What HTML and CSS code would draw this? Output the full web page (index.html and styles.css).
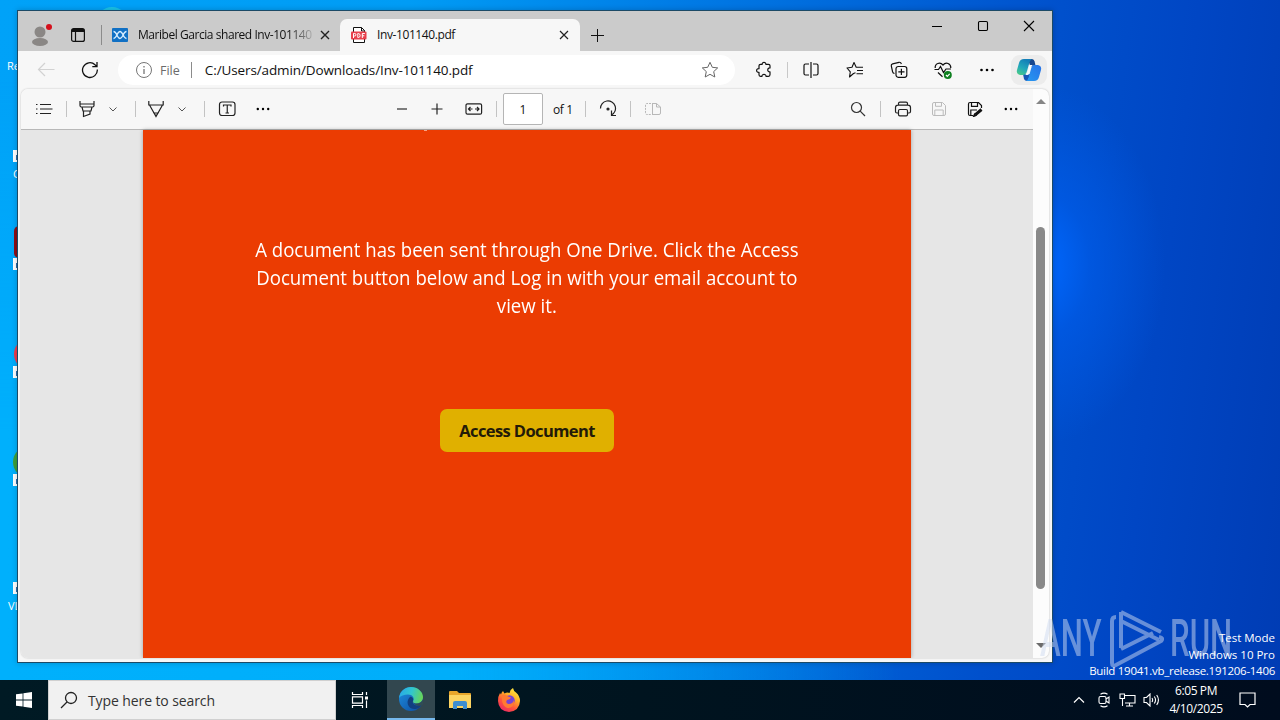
FILE: index.html
```html
<!DOCTYPE html>
<html lang="en">
<head>
    <meta charset="UTF-8">
    <meta name="viewport" content="width=device-width, initial-scale=1.0">
    <title>Inv-101140.pdf</title>
    <link rel="stylesheet" href="styles.css">
</head>
<body>
    <div class="desktop">
        <!-- desktop shortcuts, mostly hidden behind the window -->
        <span class="shortcut-label label-recycle">Recycle Bin</span>
        <span class="shortcut-arrow arrow-1"></span>
        <span class="shortcut-label label-ccleaner">CCleaner</span>
        <span class="shortcut-app app-red"></span>
        <span class="shortcut-arrow arrow-2"></span>
        <span class="shortcut-app app-opera"></span>
        <span class="shortcut-arrow arrow-3"></span>
        <span class="shortcut-app app-green"></span>
        <span class="shortcut-arrow arrow-4"></span>
        <span class="shortcut-arrow arrow-5"></span>
        <span class="shortcut-label label-vlc">VLC</span>
        <span class="shortcut-top"></span>

        <div class="window">
            <div class="tabstrip">
                <div class="profile">
                    <svg width="24" height="28" viewBox="0 0 24 28"><circle cx="11" cy="13" r="5.5" fill="#8a8785"/><ellipse cx="11" cy="23" rx="8" ry="4" fill="#8a8785"/><circle cx="20" cy="8" r="3" fill="#d5101c"/></svg>
                </div>
                <div class="workspaces">
                    <svg width="16" height="16" viewBox="0 0 16 16" fill="none" stroke="#111" stroke-width="1.2"><rect x="1.6" y="1.6" width="12.8" height="12.8" rx="2"/><path d="M2 2.8h12M2 4.2h12" stroke-width="1.6"/><path d="M5.5 4v10"/></svg>
                </div>
                <span class="strip-sep"></span>
                <div class="tab">
                    <svg width="16" height="14" viewBox="0 0 16 14"><rect width="16" height="14" rx="1" fill="#1170c4"/><path d="M1.500 3.500C5 3.500 5 10.500 8 10.500S11 3.500 14.500 3.500M1.500 10.500C5 10.500 5 3.500 8 3.500S11 10.500 14.500 10.500" fill="none" stroke="#d5ecff" stroke-width="1.300"/></svg>
                    <span class="tab-title fade">Maribel Garcia shared Inv-101140</span>
                    <svg class="tab-close" width="10" height="10" viewBox="0 0 10 10" stroke="#222" stroke-width="1.4"><path d="M1 1l8 8M9 1l-8 8"/></svg>
                </div>
                <div class="tab active">
                    <svg width="16" height="16" viewBox="0 0 16 16"><path d="M2.500 15.500V.5h8l3 3v12z" fill="#fff" stroke="#111"/><path d="M10.500.5v3.500h3.500" fill="none" stroke="#111"/><rect x="0" y="4.500" width="15.500" height="8" rx="1" fill="#e8404c"/><path d="M2.500 11V6.500h1.200a1.200 1.200 0 0 1 0 2.500H2.500M6.800 6.500v4h.8c2 0 2-4 0-4zM11.300 11V6.500h2.500M11.300 8.800h2" fill="none" stroke="#fff"/></svg>
                    <span class="tab-title">Inv-101140.pdf</span>
                    <svg class="tab-close" width="10" height="10" viewBox="0 0 10 10" stroke="#222" stroke-width="1.2"><path d="M1 1l8 8M9 1l-8 8"/></svg>
                </div>
                <svg class="new-tab" width="15" height="15" viewBox="0 0 15 15" stroke="#111"><path d="M1 7.500h13M7.500 1v13"/></svg>
                <div class="caption">
                    <svg width="12" height="12" viewBox="0 0 12 12" stroke="#000"><path d="M1 6.500h10"/></svg>
                    <svg width="12" height="12" viewBox="0 0 12 12" fill="none" stroke="#000" stroke-width="1.100"><rect x="1.500" y="1.500" width="9" height="9" rx="1.200"/></svg>
                    <svg width="12" height="12" viewBox="0 0 12 12" stroke="#000" stroke-width="1.100"><path d="M1 1l10 10M11 1L1 11"/></svg>
                </div>
            </div>

            <div class="navbar">
                <span class="slot"><svg width="18" height="16" viewBox="0 0 18 16" fill="none" stroke="#d2d2d2" stroke-width="1.200"><path d="M17.500 7.500H1.500M8 1L1.500 7.500 8 14"/></svg></span>
                <span class="slot"><svg width="18" height="18" viewBox="0 0 18 18" fill="none" stroke="#111" stroke-width="1.300"><path d="M16.300 8.500a7.400 7.400 0 1 1-2.300-4.800L16 5.500M16 1v4.700h-4.700"/></svg></span>
                <div class="address">
                    <svg width="18" height="18" viewBox="0 0 18 18" fill="none" stroke="#767676"><circle cx="9" cy="9" r="7.500"/><path d="M9 8v5M9 5v1.400" stroke-width="1.300"/></svg>
                    <span class="scheme">File</span>
                    <span class="addr-sep"></span>
                    <span class="url">C:/Users/admin/Downloads/Inv-101140.pdf</span>
                    <svg class="star" width="18" height="18" viewBox="0 0 18 18" fill="none" stroke="#666" stroke-linejoin="round"><path d="M9 1.300l2.300 5 5.400.6-4 3.700 1.100 5.400L9 13.300 4.200 16l1.100-5.400-4-3.700 5.400-.6z"/></svg>
                </div>
                <span class="slot"><svg width="18" height="18" viewBox="0 0 18 18" fill="none" stroke="#111" stroke-width="1.200" stroke-linejoin="round"><path d="M5.500 3.300H7.200C6.800.8 11.200.8 10.800 3.300H13.500Q15 3.300 15 4.800V7C12 6.600 12 11.200 15 10.800V13.500Q15 15.300 13.500 15.300H11C11.200 12.800 6.800 12.800 7 15.300H5.500Q4 15.300 4 13.800V11.300C.8 11.700.8 7.300 4 7.700V4.800Q4 3.300 5.500 3.300z"/></svg></span>
                <span class="nav-sep"></span>
                <span class="slot"><svg width="18" height="18" viewBox="0 0 18 18" fill="none" stroke="#111" stroke-width="1.200"><path d="M7 3H3.500Q2 3 2 4.500v8Q2 14 3.500 14H7M11 3h3.500Q16 3 16 4.500v8q0 1.500-1.500 1.500H11M9 1v16"/></svg></span>
                <span class="slot"><svg width="18" height="18" viewBox="0 0 18 18" fill="none" stroke="#111" stroke-width="1.100" stroke-linejoin="round"><path d="M9.500 11.800L7.500 12.500 3.500 16l.8-5.200L1 7l5-.8L8 1.500l2.200 4.700H17M11 9.500h6M10.500 12.800H17"/></svg></span>
                <span class="slot"><svg width="18" height="18" viewBox="0 0 18 18" fill="none" stroke="#111" stroke-width="1.200"><path d="M4.500 12.500Q3 12.300 2.600 10.800L1.300 5Q1 3.300 2.600 2.900L9 1.300Q10.800 1 11.400 3"/><rect x="6" y="5.500" width="10.800" height="10.800" rx="2.200"/><path d="M11.400 7.800v6.200M8.300 10.900h6.200"/></svg></span>
                <span class="slot"><svg width="18" height="18" viewBox="0 0 18 18" fill="none" stroke="#111" stroke-width="1.200"><path d="M1.200 7C.8 2.500 6 .5 9 4 12 .5 17 2.500 16.800 7M4 11.500L8.500 15.800M.5 8.500H4.500L6.500 5.500 9.500 11.500 12 8H17"/><circle cx="13.800" cy="14" r="4" fill="#0f8020" stroke="none"/><path d="M12 14l1.300 1.300 2.400-2.500" stroke="#fff"/></svg></span>
                <span class="slot"><svg width="16" height="4" viewBox="0 0 16 4"><circle cx="2.500" cy="2" r="1.300"/><circle cx="8" cy="2" r="1.300"/><circle cx="13.500" cy="2" r="1.300"/></svg></span>
                <div class="copilot">
                    <svg width="26" height="24" viewBox="0 0 26 24">
                        <defs>
                            <linearGradient id="cpLeft" x1="0" y1="1" x2=".5" y2="0"><stop offset="0" stop-color="#4fd07f"/><stop offset=".5" stop-color="#22a8bb"/><stop offset="1" stop-color="#147fb8"/></linearGradient>
                            <linearGradient id="cpRight" x1="0" y1="1" x2="1" y2="0"><stop offset="0" stop-color="#2699f0"/><stop offset="1" stop-color="#2872e8"/></linearGradient>
                        </defs>
                        <path d="M12 1h4q2 0 2.600 2.500l.8 3.500-5 2z" fill="#17468e"/>
                        <path d="M7 16h7l-2 7q-3 .5-4-2z" fill="#1757b7"/>
                        <path d="M8 1h8q-2 1-2.700 4L11 13q-1 4-4 4H4q-4-1-3-5l2-7q1-4 5-4z" fill="url(#cpLeft)"/>
                        <path d="M18 7h4q4 1 3 5l-2 7q-1 4-5 4h-8q2-1 2.800-4L15 11q1-4 3-4z" fill="url(#cpRight)"/>
                        <path d="M13.500 7h3.200q-1.700 1.500-2.200 4l-1.500 5q-.5 1-1.500 1H9q2-1 2.500-3z" fill="#f4fbff"/>
                    </svg>
                </div>
            </div>

            <div class="viewer">
                <div class="viewer-main">
                    <div class="pdfbar">
                        <span class="tool"><svg width="18" height="14" viewBox="0 0 18 14" fill="none" stroke="#222" stroke-width="1.200"><path d="M5 2.500h11M5 7h12.500M5 11.500h11"/><path d="M1 2.500h1.500M1 7h1.500M1 11.500h1.500"/></svg></span>
                        <span class="bar-sep"></span>
                        <span class="tool narrow"><svg width="16" height="18" viewBox="0 0 16 18" fill="none" stroke="#222" stroke-width="1.200"><path d="M1 1v4.500Q1 7 2.500 7h11Q15 7 15 5.500V1M1 4h14M3 7l1 4h8l1-4M4.500 11v5.500l6.500-2.500V11"/></svg></span>
                        <span class="chevron"><svg width="8" height="5" viewBox="0 0 8 5" fill="none" stroke="#555"><path d="M.5.5L4 4 7.500.5"/></svg></span>
                        <span class="bar-sep far"></span>
                        <span class="tool narrow"><svg width="16" height="18" viewBox="0 0 16 18" fill="none" stroke="#222" stroke-width="1.200"><path d="M.8 1v4h14.400V1M1.500 5L8 16.500 14.500 5M6 13h4l-2 3z"/></svg></span>
                        <span class="chevron"><svg width="8" height="5" viewBox="0 0 8 5" fill="none" stroke="#555"><path d="M.5.5L4 4 7.500.5"/></svg></span>
                        <span class="bar-sep far"></span>
                        <span class="tool"><svg width="18" height="16" viewBox="0 0 18 16" fill="none" stroke="#222" stroke-width="1.200"><rect x="1.500" y="1" width="15.500" height="13.500" rx="2.500"/><path d="M5.500 5.500V4H13v1.500M9.250 4v8M7.500 12H11"/></svg></span>
                        <span class="tool"><svg width="14" height="4" viewBox="0 0 14 4"><circle cx="1.800" cy="2" r="1.200"/><circle cx="7" cy="2" r="1.200"/><circle cx="12.200" cy="2" r="1.200"/></svg></span>

                        <span class="tool zoom-out"><svg width="12" height="12" viewBox="0 0 12 12" stroke="#555"><path d="M1 6h10" stroke-width="1.400"/></svg></span>
                        <span class="tool zoom-in"><svg width="12" height="12" viewBox="0 0 12 12" stroke="#222" stroke-width="1.200"><path d="M.5 6h11M6 .5v11"/></svg></span>
                        <span class="tool fit"><svg width="18" height="12" viewBox="0 0 18 12" fill="none" stroke="#222" stroke-width="1.200"><rect x="1" y=".8" width="15.600" height="10.400" rx="1.500"/><path d="M3.500 6H7.500M5.500 4l-2 2 2 2M10 6h4M12 4l2 2-2 2"/></svg></span>
                        <span class="bar-sep page-sep"></span>
                        <span class="page-box">1</span>
                        <span class="page-total">of 1</span>
                        <span class="bar-sep total-sep"></span>
                        <span class="tool"><svg width="18" height="18" viewBox="0 0 18 18" fill="none" stroke="#222" stroke-width="1.200"><path d="M1.500 8.500a7.500 7.500 0 1 1 11 6.500M12.500 10.500V15.500H17"/><circle cx="9" cy="9" r="1" fill="#222"/></svg></span>
                        <span class="bar-sep"></span>
                        <span class="tool"><svg width="18" height="14" viewBox="0 0 18 14" fill="none" stroke="#b8b8b8"><path d="M7 1.500H3Q1.500 1.500 1.500 3v8Q1.500 12.500 3 12.500H7" stroke-dasharray="2 1"/><path d="M8.500 1v12M8.500 1.500h4L16.500 5v6q0 1.500-1.500 1.500H8.500M12.500 1.500V5h4"/></svg></span>

                        <span class="tool search"><svg width="16" height="16" viewBox="0 0 16 16" fill="none" stroke="#333" stroke-width="1.200"><circle cx="6.500" cy="6.500" r="5"/><path d="M10.200 10.200l4.800 4.800"/></svg></span>
                        <span class="bar-sep"></span>
                        <span class="tool"><svg width="18" height="16" viewBox="0 0 18 16" fill="none" stroke="#222" stroke-width="1.200"><path d="M4.500 4V2.500Q4.500 1.200 6 1.200h6q1.500 0 1.500 1.300V4M4.500 12H3Q1.500 12 1.500 10.500V6.500Q1.500 4.200 4 4.200h10q2.500 0 2.500 2.300v4Q16.500 12 15 12h-1.500"/><rect x="4.500" y="8.500" width="9" height="6.300" rx="1.300"/></svg></span>
                        <span class="tool"><svg width="16" height="16" viewBox="0 0 16 16" fill="none" stroke="#bbb"><path d="M3 1.500h8.500l3 3V13q0 1.500-1.500 1.500H3Q1.500 14.500 1.500 13V3Q1.500 1.500 3 1.500zM4.500 1.500v3.800h6V1.500M3.800 14.500V9h8.400v5.500"/></svg></span>
                        <span class="tool"><svg width="16" height="16" viewBox="0 0 16 16" fill="none" stroke="#111" stroke-width="1.200"><path d="M6 14.500H3Q1.500 14.500 1.500 13V3Q1.500 1.500 3 1.500h8.500l3 3V7M4.500 1.500v3.800h6V1.500M3.800 14.500V9H10"/><path d="M8.500 13.700L14.500 8.500" stroke-width="3"/><path d="M6.500 15.500l1-2.500 1.500 1.500z" fill="#111"/></svg></span>
                        <span class="tool"><svg width="14" height="4" viewBox="0 0 14 4"><circle cx="1.800" cy="2" r="1.200"/><circle cx="7" cy="2" r="1.200"/><circle cx="12.200" cy="2" r="1.200"/></svg></span>
                    </div>
                    <div class="canvas">
                        <div class="page">
                            <span class="page-mark"></span>
                            <p class="message">A document has been sent through One Drive. Click the Access<br>Document button below and Log in with your email account to<br>view it.</p>
                            <span class="access">Access Document</span>
                        </div>
                    </div>
                </div>
                <div class="scrollbar">
                    <span class="scroll-up"></span>
                    <span class="scroll-thumb"></span>
                    <span class="scroll-down"></span>
                </div>
            </div>
        </div>

        <div class="anyrun">
            <span>ANY</span>
            <svg width="54" height="60" viewBox="0 0 54 60" fill="none" stroke="currentColor" stroke-width="4" stroke-linejoin="round"><path d="M11 3L51 23M11 3v36M6 8Q2 8 2 12V54Q2 58 6 56L51 32Q54 29 49 28M11 12l38 19M11 40L43 24"/></svg>
            <span>RUN</span>
        </div>
        <div class="build">
            <span>Test Mode</span>
            <span>Windows 10 Pro</span>
            <span class="build-no">Build 19041.vb_release.191206-1406</span>
        </div>
    </div>

    <div class="taskbar">
        <span class="task start"><svg width="16" height="16" viewBox="0 0 16 16" fill="#fff"><path d="M0 2.300l6.600-.9v6.200H0zM7.400 1.200L16 0v7.600H7.400zM0 8.400h6.600v6.200L0 13.700zM7.400 8.400H16V16l-8.600-1.200z"/></svg></span>
        <div class="searchbox">
            <svg width="18" height="18" viewBox="0 0 18 18" fill="none" stroke="#222" stroke-width="1.300"><circle cx="11" cy="7" r="5.500"/><path d="M7 11l-6 6"/></svg>
            <span>Type here to search</span>
        </div>
        <span class="task start"><svg width="18" height="18" viewBox="0 0 18 18" fill="none" stroke="#fff" stroke-width="1.200"><path d="M1.500 1v2.500h10V1M1.500 17v-2.500h10V17M1.500 5.800h10v6.400h-10zM15.500 1v3M15.500 9.500V17"/><path d="M14 5.500h3v3h-3z" fill="#fff" stroke="none"/></svg></span>
        <span class="task current"><svg width="24" height="24" viewBox="0 0 24 24">
            <defs>
                <linearGradient id="edgeTop" x1="0" y1=".3" x2="1" y2=".5"><stop offset="0" stop-color="#28a8e8"/><stop offset=".5" stop-color="#31c6cf"/><stop offset="1" stop-color="#68d557"/></linearGradient>
                <linearGradient id="edgeLow" x1="0" y1="0" x2="1" y2="1"><stop offset="0" stop-color="#1f8fe0"/><stop offset="1" stop-color="#0c4ba0"/></linearGradient>
            </defs>
            <circle cx="12" cy="12" r="12" fill="url(#edgeLow)"/>
            <path d="M0 11C1 4 6 0 12 0c7 0 12 5 12 10 0 4-3 6.500-6.500 6.500-3 0-4.500-1-3.500-2.500 2-3-.5-6.500-5-6.500C5 7.500 1.500 9 0 11z" fill="url(#edgeTop)"/>
            <path d="M14 14c-1 2 1 4.500 4.500 4.500 2 0 3.500-.7 4.200-1C21 21 18 22 15.500 22 10 22 7.500 17 9 13c.7-2 2-3 2.500-3.300 2 .3 3.500 2.300 2.500 4.300z" fill="#123f80"/>
            <path d="M14 14c-1 1.500.5 2.500 3.500 2.500 3 0 5-1.500 6.500-4v5c-3 3-9.500 1-10-3.500z" fill="#314b55"/>
        </svg></span>
        <span class="task"><svg width="22" height="20" viewBox="0 0 22 20"><path d="M0 2q0-1 1-1h7l2 2h11q1 0 1 1v4H0z" fill="#e8a62b"/><path d="M0 5h22v13H0z" fill="#fcd462"/><path d="M4 19v-6q0-2 2-2h10q2 0 2 2v6h-4v-3H8v3z" fill="#3e8ed0"/></svg></span>
        <span class="task"><svg width="24" height="24" viewBox="0 0 24 24">
            <defs>
                <linearGradient id="fox" x1=".8" y1="0" x2=".2" y2="1"><stop offset="0" stop-color="#fff044"/><stop offset=".35" stop-color="#ffb027"/><stop offset=".65" stop-color="#ff563b"/><stop offset="1" stop-color="#e82567"/></linearGradient>
            </defs>
            <path d="M3 5l1 1.500Q4.500 4 6 3l1.500 2.500Q10 4 12.500 5 13 1.500 16 0q.5 3 3 4.500Q23 8 23 13q-.5 10-11 11Q1.500 23 1 13 1 8 3 5z" fill="url(#fox)"/>
            <circle cx="12.500" cy="12.500" r="5.200" fill="#7543d6"/>
            <path d="M5 7q3-1.500 6 1.500l3 1q-1 2-4 2.500-2 3 1.500 4 4.500 0 5.500-4 1 8-6.500 8Q4 18 5 7z" fill="#ff7a32"/>
        </svg></span>
        <div class="tray">
            <svg class="tray-up" width="12" height="8" viewBox="0 0 12 8" fill="none" stroke="#fff" stroke-width="1.200"><path d="M1 6.500l5-5 5 5"/></svg>
            <svg class="tray-cam" width="12" height="16" viewBox="0 0 12 16" fill="none" stroke="#fff" stroke-width="1.100"><rect x="1" y="4.500" width="7" height="7" rx="1.500"/><path d="M8 7l3-2v6L8 9M2.500 2.200Q6 0 9.500 2.200M2.500 13.800Q6 16 9.500 13.800"/></svg>
            <svg class="tray-net" width="17" height="14" viewBox="0 0 17 14" fill="none" stroke="#fff" stroke-width="1.100"><path d="M5 2.500h11v7.500H6M10.500 10v3M7 13h7M3.500 6v7M1 1h4.500v4.500H1z"/></svg>
            <svg class="tray-vol" width="18" height="14" viewBox="0 0 18 14" fill="none" stroke="#fff" stroke-width="1.100"><path d="M1 4.500h2.500L7 1v12L3.500 9.500H1zM9 5q1.300 2 0 4M11.300 3.500q2.500 3.500 0 7M13.700 2q3.500 5 0 10"/></svg>
            <div class="clock"><span>6:05 PM</span><span>4/10/2025</span></div>
            <svg class="tray-note" width="17" height="17" viewBox="0 0 17 17" fill="none" stroke="#fff" stroke-width="1.200"><path d="M1 1h15v11.500h-5L8.500 15 6 12.500H1z"/></svg>
        </div>
    </div>
</body>
</html>
```

FILE: styles.css
```css
* {
    box-sizing: border-box;
}
body {
    margin: 0;
    width: 1280px;
    height: 720px;
    overflow: hidden;
    font-family: "Open Sans", "Noto Sans", sans-serif;
    font-size: 12px;
    color: #111;
}
svg {
    display: block;
    flex: none;
}

/* desktop */
.desktop {
    position: relative;
    height: 680px;
    overflow: hidden;
    background:
        radial-gradient(ellipse 125px 180px at 1040px 265px, #0068ff 0%, rgba(0, 94, 238, 0.6) 40%, rgba(0, 80, 210, 0) 100%),
        linear-gradient(97deg, #00a2f8 0%, #009cf5 30%, #0078e4 52%, #0050cc 78%, #0046c4 88%, #003cb4 100%);
}
.desktop::before {
    content: "";
    position: absolute;
    left: 0;
    bottom: 0;
    width: 900px;
    height: 600px;
    background: linear-gradient(to right, #00b0fc, #00aefa 50%, rgba(0, 150, 245, 0));
    -webkit-mask-image: linear-gradient(to bottom, transparent, #000 60%);
    mask-image: linear-gradient(to bottom, transparent, #000 60%);
}
.shortcut-label {
    position: absolute;
    color: #fff;
    font-size: 11px;
    white-space: nowrap;
}
.label-recycle { left: 7px; top: 58px; }
.label-ccleaner { left: 13px; top: 166px; }
.label-vlc { left: 8px; top: 598px; }
.shortcut-arrow {
    position: absolute;
    left: 13px;
    width: 11px;
    height: 12px;
    background: #fff;
}
.shortcut-arrow::after {
    content: "";
    position: absolute;
    left: 3px;
    top: 5px;
    width: 4px;
    height: 5px;
    background: #2a6cb0;
}
.arrow-1 { top: 150px; }
.arrow-2 { top: 258px; }
.arrow-3 { top: 366px; }
.arrow-4 { top: 474px; }
.arrow-5 { top: 582px; }
.shortcut-app {
    position: absolute;
    left: 14px;
    width: 32px;
    height: 32px;
}
.app-red { top: 226px; background: #8e1018; border-radius: 5px; }
.app-opera { top: 338px; background: #f03c4c; border-radius: 50%; }
.app-green { left: 13px; top: 446px; background: #3c9f3c; border-radius: 50%; }
.shortcut-top {
    position: absolute;
    left: 96px;
    top: 7px;
    width: 32px;
    height: 32px;
    background: #19c3e8;
    border-radius: 50%;
}

/* browser window */
.window {
    position: absolute;
    left: 17px;
    top: 10px;
    width: 1036px;
    height: 653px;
    display: flex;
    flex-direction: column;
    background: #f7f7f7;
    border: 1px solid #1c4a66;
    box-shadow: 0 0 6px rgba(0, 0, 0, 0.2);
}
.tabstrip {
    display: flex;
    height: 40px;
    flex: none;
    align-items: center;
    padding-top: 8px;
    background: #cbcbcb;
}
.profile {
    margin: -5px 0 0 11px;
    width: 24px;
}
.workspaces {
    margin-left: 17px;
}
.strip-sep {
    width: 1px;
    height: 20px;
    margin-left: 15px;
    background: #8b8b8b;
}
.tab {
    display: flex;
    align-items: center;
    align-self: stretch;
    width: 238px;
    padding: 0 10px;
}
.tab.active {
    width: 240px;
    padding: 0 11px;
    background: #f7f7f7;
    border-radius: 7px 7px 0 0;
}
.tab-title {
    flex: 1;
    margin-left: 10px;
    white-space: nowrap;
    font-size: 12px;
    line-height: 16px;
    letter-spacing: -0.4px;
}
.fade {
    letter-spacing: -0.45px;
    -webkit-mask-image: linear-gradient(to right, #000 86%, transparent 103%);
    mask-image: linear-gradient(to right, #000 86%, transparent 103%);
}
.tab-close {
    margin-left: 8px;
}
.new-tab {
    margin-left: 10px;
}
.caption {
    display: flex;
    gap: 34px;
    margin: -18px 17px 0 auto;
}

.navbar {
    display: flex;
    align-items: center;
    flex: none;
    height: 38px;
    padding-left: 6px;
}
.slot {
    display: flex;
    justify-content: center;
    width: 44px;
    flex: none;
}
.address {
    display: flex;
    align-items: center;
    width: 617px;
    height: 30px;
    margin: 0 7px 0 6px;
    padding: 0 16px 0 17px;
    border-radius: 15px;
    background: #fff;
}
.scheme {
    margin-left: 7px;
    color: #6b6b6b;
    font-size: 12.5px;
}
.addr-sep {
    width: 1px;
    height: 16px;
    margin: 0 13px 0 11px;
    background: #8b8b8b;
}
.url {
    font-size: 13.5px;
    letter-spacing: -0.11px;
}
.star {
    margin-left: auto;
}
.nav-sep {
    width: 1px;
    height: 16px;
    margin: 0 1px;
    background: #c8c8c8;
}
.copilot {
    display: flex;
    align-items: center;
    justify-content: center;
    width: 36px;
    height: 30px;
    margin-left: 2px;
    border-radius: 9px;
    background: #ececec;
}

/* pdf viewer */
.viewer {
    display: flex;
    flex: 1;
    margin: 0 3px 4px;
    border-radius: 7px;
    overflow: hidden;
    background: #fcfcfc;
    box-shadow: 0 0 2px rgba(0, 0, 0, 0.25);
}
.viewer-main {
    display: flex;
    flex-direction: column;
    width: 1012px;
}
.pdfbar {
    display: flex;
    align-items: center;
    flex: none;
    height: 41px;
    padding: 0 4px 0 5px;
    background: #f7f7f7;
    border-bottom: 1px solid #b8b8b8;
}
.tool {
    display: flex;
    justify-content: center;
    width: 36px;
    flex: none;
}
.narrow {
    width: 32px;
}
.chevron {
    display: flex;
    justify-content: center;
    width: 20px;
}
.bar-sep {
    width: 1px;
    height: 16px;
    margin: 0 4px;
    background: #c3c3c3;
}
.bar-sep.far {
    margin-left: 12px;
}
.zoom-out {
    width: 35px;
    margin-left: 103px;
}
.zoom-in {
    width: 35px;
}
.fit {
    width: 39px;
}
.page-sep {
    margin: 0 6px 0 3px;
}
.page-box {
    width: 40px;
    height: 32px;
    border: 1px solid #b5b5b5;
    border-radius: 2px;
    background: #fff;
    line-height: 31px;
    text-align: center;
}
.page-total {
    width: 22px;
    margin-left: 10px;
    white-space: nowrap;
    letter-spacing: -0.4px;
}
.total-sep {
    margin-left: 10px;
}
.search {
    margin-left: auto;
}
.canvas {
    flex: 1;
    background: #e6e6e6;
}
.page {
    display: flex;
    flex-direction: column;
    align-items: center;
    width: 768px;
    height: 100%;
    margin-left: 122px;
    background: #eb3c02;
    box-shadow: 0 0 4px rgba(0, 0, 0, 0.3);
}
/* tip of the heading that is scrolled out of view */
.page-mark {
    align-self: flex-start;
    width: 3px;
    height: 1px;
    margin-left: 281px;
    background: #f6a386;
}
.message {
    margin: 105px 0 0;
    color: #fff;
    font-size: 20px;
    line-height: 28px;
    text-align: center;
    white-space: nowrap;
    transform: scaleX(0.931);
}
.access {
    width: 174px;
    height: 43px;
    margin-top: 89px;
    border-radius: 7px;
    background: #e0b000;
    color: #231a08;
    font-size: 16.5px;
    font-weight: bold;
    line-height: 44px;
    letter-spacing: -0.6px;
    text-align: center;
    white-space: nowrap;
}
.scrollbar {
    display: flex;
    flex-direction: column;
    align-items: center;
    width: 15px;
    padding: 10px 0 10px;
}
.scroll-up,
.scroll-down {
    border: 5px solid transparent;
}
.scroll-up {
    border-top: 0;
    border-bottom: 5px solid #868686;
}
.scroll-down {
    border-bottom: 0;
    border-top: 5px solid #6b6b6b;
    margin-top: auto;
}
.scroll-thumb {
    width: 9px;
    height: 362px;
    margin-top: 123px;
    border-radius: 5px;
    background: #898989;
}

/* watermarks over the wallpaper */
.anyrun {
    position: absolute;
    left: 1040px;
    top: 609px;
    display: flex;
    align-items: center;
    color: rgba(205, 218, 240, 0.5);
    font-family: Roboto, sans-serif;
    font-size: 52px;
    font-weight: 500;
    line-height: 60px;
}
.anyrun span {
    display: block;
    width: 62px;
    transform: scaleX(0.6);
    transform-origin: left;
}
.anyrun svg {
    margin: 0 6px 0 8px;
}
.build {
    position: absolute;
    right: 5px;
    top: 630px;
    display: flex;
    flex-direction: column;
    align-items: flex-end;
    color: #fff;
    font-size: 11.5px;
    line-height: 16.5px;
}
.build-no {
    letter-spacing: -0.28px;
}

/* taskbar */
.taskbar {
    display: flex;
    height: 40px;
    background: linear-gradient(to right, #001a24, #00141f 50%, #000c1e);
}
.task {
    display: flex;
    align-items: center;
    justify-content: center;
    width: 49px;
    flex: none;
}
.start {
    width: 48px;
}
.searchbox {
    display: flex;
    align-items: center;
    width: 288px;
    padding-left: 11px;
    background: #f1f1f1;
    border: 1px solid #d0d0d0;
    font-size: 14px;
    color: #333;
}
.searchbox span {
    margin-left: 10px;
    letter-spacing: -0.1px;
}
.current {
    width: 48px;
    margin-left: 3px;
    background: #32474f;
    border-bottom: 2px solid #76b9ed;
}
.tray {
    display: flex;
    align-items: center;
    margin-left: auto;
    padding-right: 24px;
    color: #fff;
}
.tray-cam { margin-left: 13px; }
.tray-net { margin-left: 9px; }
.tray-vol { margin-left: 7px; }
.clock {
    display: flex;
    flex-direction: column;
    align-items: center;
    width: 54px;
    margin: 0 16px 0 8px;
    line-height: 18px;
    letter-spacing: -0.4px;
}
```
